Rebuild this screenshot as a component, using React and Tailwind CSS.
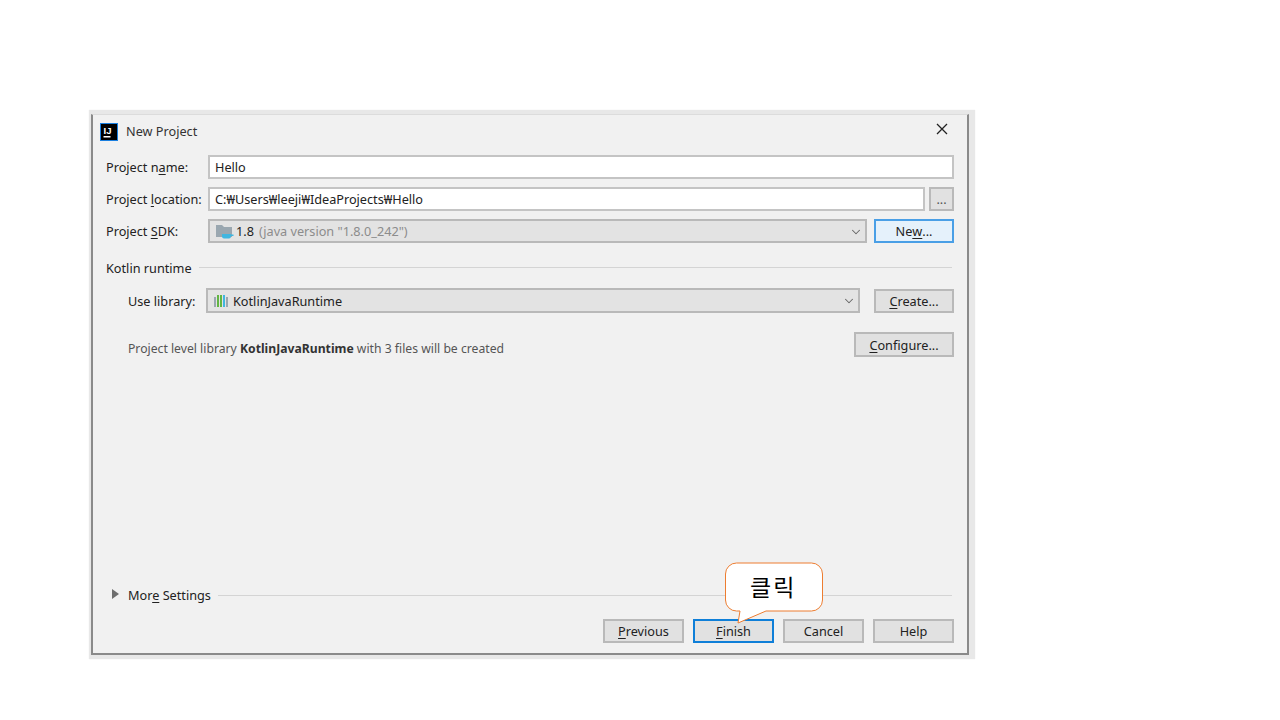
import React from 'react';
import { ChevronDown } from 'lucide-react';

const U = ({ children }) => <span className="underline underline-offset-2">{children}</span>;

const Button = ({ className = '', children }) => (
  <button className={`flex h-[24px] items-center justify-center border-2 border-[#b9b9b9] bg-[#e1e1e1] pt-[1px] text-[#222] ${className}`}>
    {children}
  </button>
);

const Input = ({ className = '', children }) => (
  <div className={`flex h-[24px] items-center border-2 border-[#c4c4c4] bg-white pl-[5px] pt-[1px] text-[#222] ${className}`}>
    {children}
  </div>
);

const Select = ({ className = '', children }) => (
  <div className={`flex items-center border-2 border-[#b9b9b9] bg-[#e3e3e3] pl-[6px] pt-[1px] ${className}`}>
    <div className="flex flex-1 items-center">{children}</div>
    <ChevronDown size={14} strokeWidth={1.8} className="mr-[2px] text-[#666]" />
  </div>
);

const AppIcon = () => (
  <svg width="18" height="18" viewBox="0 0 18 18" className="shrink-0">
    <rect x="0.5" y="0.5" width="17" height="17" fill="#000" stroke="#1a7fe0" />
    <text x="3.500" y="10.500" fontSize="9.500" fontWeight="700" fill="#fff" fontFamily="Liberation Sans, sans-serif">IJ</text>
    <rect x="3.500" y="13" width="7" height="1.500" fill="#fff" />
  </svg>
);

const SdkIcon = () => (
  <svg width="18" height="16" viewBox="0 0 18 16" className="shrink-0">
    <path d="M0 1h6l2 2h8v10H0z" fill="#9aa7b0" />
    <path d="M6 10h9v2.500a2 2 0 0 1-2 2H8a2 2 0 0 1-2-2z" fill="#40b6e0" />
    <rect x="15" y="10.500" width="2.500" height="1.500" fill="#40b6e0" />
  </svg>
);

const LibraryIcon = () => (
  <svg width="16" height="14" viewBox="0 0 16 14" className="shrink-0">
    <rect x="0" y="3" width="2" height="10" fill="#9aa7b0" />
    <rect x="3" y="1" width="2" height="12" fill="#62b543" />
    <rect x="6" y="1" width="2" height="12" fill="#62b543" />
    <rect x="9" y="1" width="2" height="12" fill="#40b6e0" />
    <rect x="12" y="3" width="2" height="10" fill="#9aa7b0" />
  </svg>
);

const Bubble = () => (
  <div className="absolute left-[631px] top-[447px] h-[62px] w-[101px]">
    <svg width="101" height="62" viewBox="0 0 101 62" className="absolute inset-0">
      <path
        d="M12.500 1h75a11 11 0 0 1 11 11v26a11 11 0 0 1-11 11H42L14 61l2-12h-3.500a11 11 0 0 1-11-11V12a11 11 0 0 1 11-11z"
        fill="#fff"
        stroke="#ed7d31"
        strokeWidth="1"
      />
    </svg>
    <span className="absolute left-[26px] top-[9px] text-[23px] leading-[32px] tracking-[2px] text-black">클릭</span>
  </div>
);

export default function App() {
  return (
    <div className="h-[720px] w-[1280px] overflow-hidden bg-white pl-[91px] pt-[114px] font-['Noto_Sans','Noto_Sans_CJK_KR',sans-serif] text-[12.7px]">
      <div className="relative flex h-[541px] w-[878px] flex-col border-x-2 border-b-2 border-t border-x-[#8a8a8a] border-b-[#8a8a8a] border-t-[#dcdcdc] bg-[#f1f1f1] pl-[13px] pr-[13px] text-[#222] shadow-[2px_0_1px_4px_#e8e8e8]">
        {/* Title bar */}
        <div className="-ml-[6px] flex h-[31px] items-center gap-[8px] pt-[2px]">
          <AppIcon />
          <span className="text-[#333]">New Project</span>
          <svg width="12" height="12" viewBox="0 0 12 12" className="ml-auto mr-[6px] -mt-[6px]">
            <path d="M1 1l10 10M11 1L1 11" stroke="#222" strokeWidth="1.300" />
          </svg>
        </div>

        {/* Project fields */}
        <div className="mt-[9px] flex flex-col gap-[8px]">
          <div className="flex items-center">
            <span className="w-[102px] pt-[1px]">Project n<U>a</U>me:</span>
            <Input className="flex-1">Hello</Input>
          </div>
          <div className="flex items-center">
            <span className="w-[102px] pt-[1px]">Project <U>l</U>ocation:</span>
            <Input className="flex-1">C:₩Users₩leeji₩IdeaProjects₩Hello</Input>
            <Button className="ml-[4px] w-[25px] text-[#555]">...</Button>
          </div>
          <div className="flex items-center">
            <span className="w-[102px] pt-[2px]">Project <U>S</U>DK:</span>
            <Select className="h-[24px] w-[659px]">
              <SdkIcon />
              <span className="ml-[2px] text-[#222]">1.8</span>
              <span className="ml-[5px] text-[#8c8c8c]">(java version "1.8.0_242")</span>
            </Select>
            <Button className="ml-[7px] w-[80px] !border-[#4a9fe6] !bg-[#e5f1fb]">Ne<U>w</U>...</Button>
          </div>
        </div>

        {/* Kotlin runtime */}
        <div className="mt-[16px] flex items-center gap-[7px]">
          <span>Kotlin runtime</span>
          <div className="mr-[2px] -mt-[2px] h-[1px] flex-1 bg-[#d4d4d4]" />
        </div>
        <div className="mt-[10px] flex items-center pl-[22px]">
          <span className="w-[78px] pt-[1px]">Use library:</span>
          <Select className="h-[25px] w-[654px]">
            <LibraryIcon />
            <span className="ml-[3px]">KotlinJavaRuntime</span>
          </Select>
          <Button className="ml-[14px] w-[80px]"><U>C</U>reate...</Button>
        </div>
        <div className="mt-[19px] flex items-start justify-between pl-[22px]">
          <span className="pt-[8px] text-[12.2px] text-[#555]">
            Project level library <b className="font-bold text-[#333]">KotlinJavaRuntime</b> with 3 files will be created
          </span>
          <Button className="h-[25px] w-[100px]"><U>C</U>onfigure...</Button>
        </div>

        {/* More settings */}
        <div className="mt-auto flex items-center">
          <svg width="7" height="10" viewBox="0 0 7 10" className="ml-[6px] mr-[9px] -mt-[2px]">
            <path d="M0 0l7 5-7 5z" fill="#6e6e6e" />
          </svg>
          <span>Mor<U>e</U> Settings</span>
          <div className="ml-[7px] mr-[2px] h-[1px] flex-1 bg-[#d4d4d4]" />
        </div>

        {/* Footer buttons */}
        <div className="mb-[10px] mt-[14px] flex justify-end gap-[9px]">
          <Button className="w-[81px]"><U>P</U>revious</Button>
          <Button className="w-[81px] !border-[#0f7fd8]"><U>F</U>inish</Button>
          <Button className="w-[81px]">Cancel</Button>
          <Button className="w-[81px]">Help</Button>
        </div>

        <Bubble />
      </div>
    </div>
  );
}
